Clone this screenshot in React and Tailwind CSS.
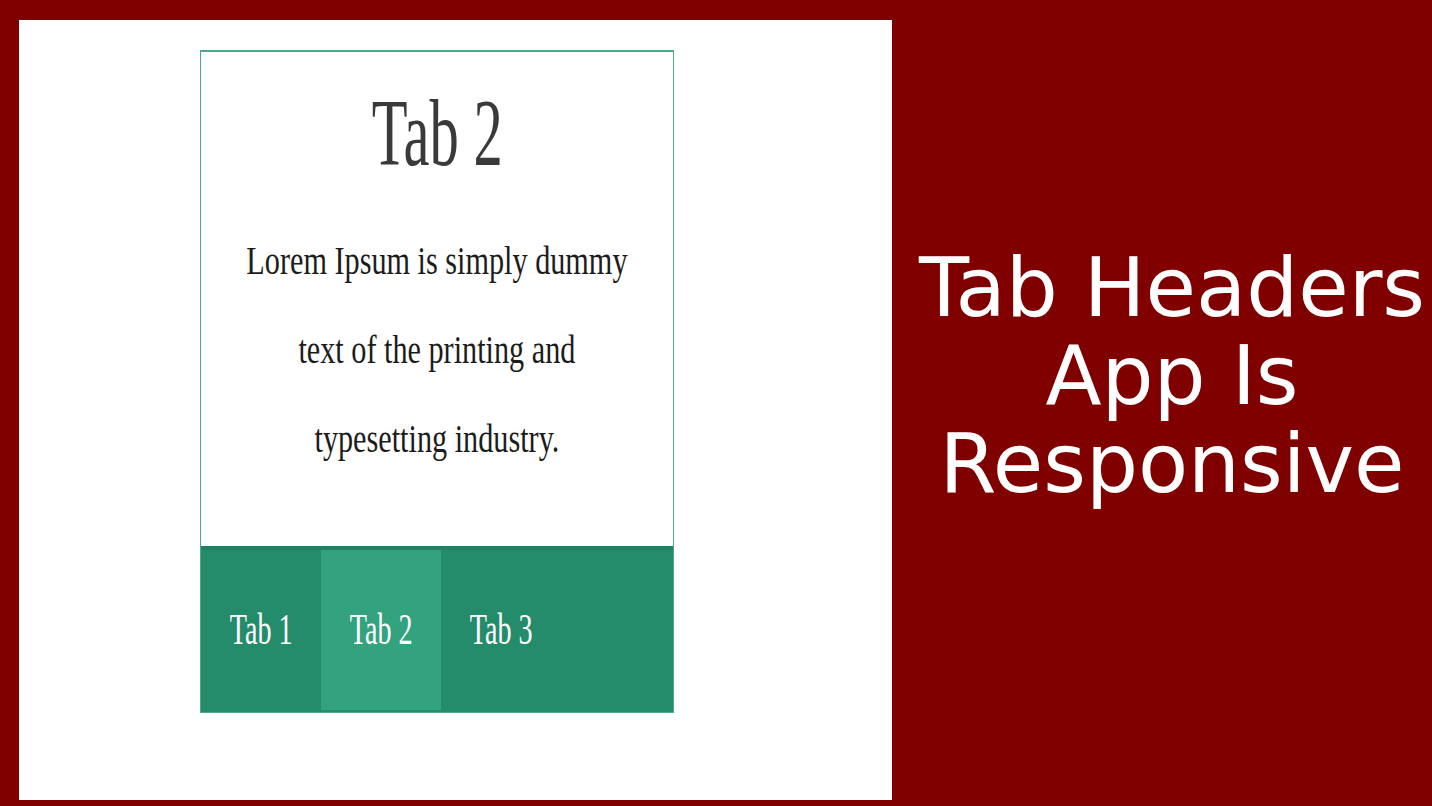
import React from 'react';

const tabs = ['Tab 1', 'Tab 2', 'Tab 3'];

const App = () => {
  const active = 1;

  return (
    <div className="flex h-[806px] w-[1432px] overflow-hidden bg-[#800000]">
      <div className="ml-[19px] mt-[20px] h-[780px] w-[873px] shrink-0 bg-white">
        <div className="ml-[181px] mt-[30px] flex h-[663px] w-[474px] flex-col border border-t-2 border-[#4fa886] bg-white">
          <div className="flex flex-1 flex-col items-center overflow-visible pt-[33px] font-['Liberation_Serif',serif]">
            <h1 className="scale-x-[0.61] whitespace-nowrap text-[96px] leading-none text-[#3a3a3a]">
              Tab 2
            </h1>
            <p className="mt-[35px] scale-x-[0.775] whitespace-nowrap text-center text-[39px] leading-[89px] text-[#1c1c1c]">
              Lorem Ipsum is simply dummy
              <br />
              text of the printing and
              <br />
              typesetting industry.
            </p>
          </div>
          <div className="flex h-[166px] border-t-[4px] border-[#1f8262] bg-[#248b6b] pb-[2px]">
            {tabs.map((tab, i) => (
              <button
                key={tab}
                className={`flex h-full w-[120px] items-center justify-center font-['Liberation_Serif',serif] text-[44px] text-white ${
                  i === active ? 'bg-[#33a27e]' : ''
                }`}
              >
                <span className="inline-block scale-x-[0.64] whitespace-nowrap">{tab}</span>
              </button>
            ))}
          </div>
        </div>
      </div>
      <div className="flex flex-1 flex-col items-center pl-[20px] pt-[244px] text-center font-['DejaVu_Sans',Verdana,sans-serif] text-[82px] leading-[88px] text-white">
        <div className="whitespace-nowrap">Tab Headers</div>
        <div className="whitespace-nowrap">App Is</div>
        <div className="whitespace-nowrap">Responsive</div>
      </div>
    </div>
  );
};

export default App;
